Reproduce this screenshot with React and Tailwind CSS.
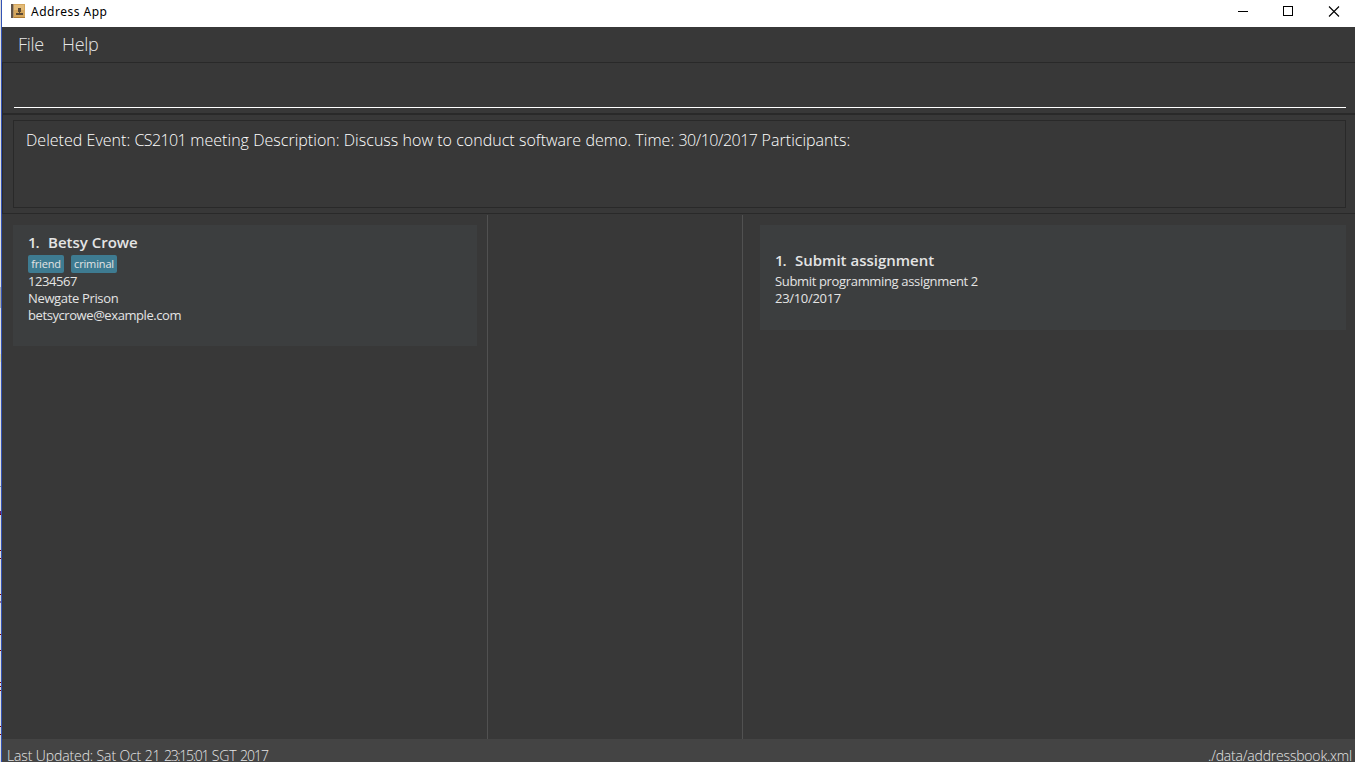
const edgeMarks = [
  { h: 270, c: "bg-[#dcdcdc]" },
  { h: 17, c: "bg-[#dcdcdc]" },
  { h: 21, c: "bg-[#a9a9a9]" },
  { h: 46, c: "bg-[#dcdcdc]" },
  { h: 8, c: "bg-[#dcd8a8]" },
  { h: 124, c: "bg-[#dcdcdc]" },
  { h: 1, c: "bg-[#909090]" },
  { h: 24, c: "bg-[#dcdcdc]" },
  { h: 3, c: "bg-[#6a2070]" },
  { h: 1, c: "bg-[#800000]" },
  { h: 35, c: "bg-[#dcdcdc]" },
  { h: 1, c: "bg-[#800000]" },
  { h: 7, c: "bg-[#dcdcdc]" },
  { h: 1, c: "bg-[#800000]" },
  { h: 35, c: "bg-[#dcdcdc]" },
  { h: 1, c: "bg-[#800000]" },
  { h: 6, c: "bg-[#dcdcdc]" },
  { h: 2, c: "bg-[#8a6a90]" },
  { h: 31, c: "bg-[#dcdcdc]" },
  { h: 1, c: "bg-[#800000]" },
  { h: 15, c: "bg-[#dcdcdc]" },
  { h: 1, c: "bg-[#800000]" },
  { h: 31, c: "bg-[#dcdcdc]" },
  { h: 1, c: "bg-[#800000]" },
  { h: 3, c: "bg-[#dcdcdc]" },
  { h: 1, c: "bg-[#800000]" },
  { h: 3, c: "bg-[#dcdcdc]" },
  { h: 1, c: "bg-[#800000]" },
  { h: 35, c: "bg-[#dcdcdc]" },
  { h: 1, c: "bg-[#800000]" },
  { h: 7, c: "bg-[#dcdcdc]" },
  { h: 1, c: "bg-[#800000]" },
  { h: 27, c: "bg-[#dcdcdc]" },
];

function BookIcon() {
  return (
    <svg width="15" height="15" viewBox="0 0 15 15" shapeRendering="crispEdges">
      <rect x="0" y="0" width="14" height="14" fill="#d5a65c" />
      <rect x="3" y="1" width="10" height="5" fill="#e3bb78" />
      <rect x="0" y="0" width="2" height="14" fill="#5f5248" />
      <rect x="2" y="0" width="1" height="14" fill="#b39468" />
      <rect x="3" y="13" width="11" height="1" fill="#b07c34" />
      <rect x="7" y="4" width="3" height="4" fill="#5c4a34" />
      <rect x="8" y="8" width="1" height="1" fill="#5c4a34" />
      <rect x="5" y="9" width="7" height="2" fill="#5c4a34" />
    </svg>
  );
}

function TitleBar() {
  return (
    <header className="flex h-[27px] shrink-0 bg-white pl-[9px]">
      <div className="pt-[4px]"><BookIcon /></div>
      <h1 className="ml-[5px] pt-[3px] font-['Noto_Sans',sans-serif] text-[12px] leading-[18px] font-normal tracking-[0.5px] text-black">Address App</h1>
      <svg className="ml-auto" width="135" height="27" viewBox="0 0 135 27" fill="none" stroke="#000">
        <path d="M18 11.5h10M63.5 6.5h9v9h-9z" shapeRendering="crispEdges" />
        <path d="M109 6.5l10 10M119 6.5l-10 10" strokeWidth="1.1" />
      </svg>
    </header>
  );
}

function Card({ className, title, titleSpacing, tags, lines }) {
  return (
    <article className={`bg-[#3c3e3f] pl-[15px] font-['Open_Sans','Noto_Sans',sans-serif] font-normal text-[#e4e4e4] ${className}`}>
      <h2 className={`flex h-[22px] text-[15px] leading-[18px] font-semibold ${titleSpacing}`}>
        <span className="w-[20px] tracking-[-1px]">1.</span>
        <span>{title}</span>
      </h2>
      {tags && (
        <div className="flex h-[18px] gap-[7px]">
          {tags.map((t) => (
            <span key={t.name} className={`flex h-[18px] items-center justify-center rounded-[2px] bg-[#3e7b91] text-[11px] leading-[18px] ${t.width} ${t.spacing}`}>{t.name}</span>
          ))}
        </div>
      )}
      {lines.map((l) => (
        <p key={l.text} className={`h-[17px] text-[13px] leading-[17px] whitespace-nowrap ${l.spacing}`}>{l.text}</p>
      ))}
    </article>
  );
}

export default function App() {
  return (
    <div className="flex h-[762px] w-[1355px] overflow-hidden bg-[#383838] font-['Open_Sans','Noto_Sans',sans-serif] font-light text-[#e6e6e6]">
      <div className="w-px shrink-0">
        {edgeMarks.map((m, i) => (
          <div key={i} className={`w-px ${m.c}`} style={{ height: m.h }} />
        ))}
      </div>
      <div className="w-px shrink-0 bg-[#3353b5]" />
      <div className="flex min-w-0 grow flex-col">
        <TitleBar />
        <nav className="flex h-[35px] shrink-0 gap-[18px] pl-[16px] text-[18px] leading-[35px]">
          <span className="w-[26px] whitespace-nowrap tracking-[-0.3px]">File</span>
          <span className="whitespace-nowrap tracking-[-0.3px]">Help</span>
        </nav>
        <section className="h-[53px] shrink-0 border-t border-b-2 border-l border-[#292929] pr-[9px] pl-[11px]">
          <div className="h-[45px] border-b border-white" />
        </section>
        <section className="h-[99px] shrink-0 border-b border-l border-[#292929] pt-[5px] pr-[9px] pl-[10px]">
          <div className="h-[88px] border border-[#292929] pt-[7px] pl-[12px] text-[16px] leading-[24px] tracking-[0.03px] whitespace-nowrap text-white">
            Deleted Event: <span className="tracking-[-0.6px]">CS2101</span> meeting Description: Discuss how to conduct software demo. Time: <span className="tracking-[-0.5px]">30/10/2017</span> Participants:
          </div>
        </section>
        <main className="flex min-h-0 grow pt-px">
          <section className="w-[486px] shrink-0 border-r border-[#515151] pt-[10px] pr-[10px] pl-[11px]">
            <Card
              className="h-[121px] pt-[8px]"
              title="Betsy Crowe"
              titleSpacing="tracking-[0px]"
              tags={[
                { name: "friend", width: "w-[36px]", spacing: "tracking-[-0.2px]" },
                { name: "criminal", width: "w-[46px]", spacing: "tracking-[-0.15px]" },
              ]}
              lines={[
                { text: "1234567", spacing: "tracking-[-0.45px]" },
                { text: "Newgate Prison", spacing: "tracking-[-0.35px]" },
                { text: "betsycrowe@example.com", spacing: "tracking-[-0.42px]" },
              ]}
            />
          </section>
          <section className="w-[255px] shrink-0 border-r border-[#515151]" />
          <section className="grow pt-[10px] pr-[9px] pl-[17px]">
            <Card
              className="h-[105px] pt-[26px]"
              title="Submit assignment"
              titleSpacing="tracking-[0px]"
              lines={[
                { text: "Submit programming assignment 2", spacing: "tracking-[-0.34px]" },
                { text: "23/10/2017", spacing: "tracking-[-0.3px]" },
              ]}
            />
          </section>
        </main>
        <footer className="flex h-[23px] shrink-0 justify-between overflow-hidden bg-[#444444] pt-[5px] pr-[3px] pl-[5px] text-[14px] leading-[24px] whitespace-nowrap">
          <span className="tracking-[-0.12px]">Last Updated: Sat Oct 21 <span className="tracking-[-1.3px]">23:15:01</span> SGT <span className="tracking-[-1px]">2017</span></span>
          <span className="tracking-[-0.2px]">./data/addressbook.xml</span>
        </footer>
      </div>
    </div>
  );
}
